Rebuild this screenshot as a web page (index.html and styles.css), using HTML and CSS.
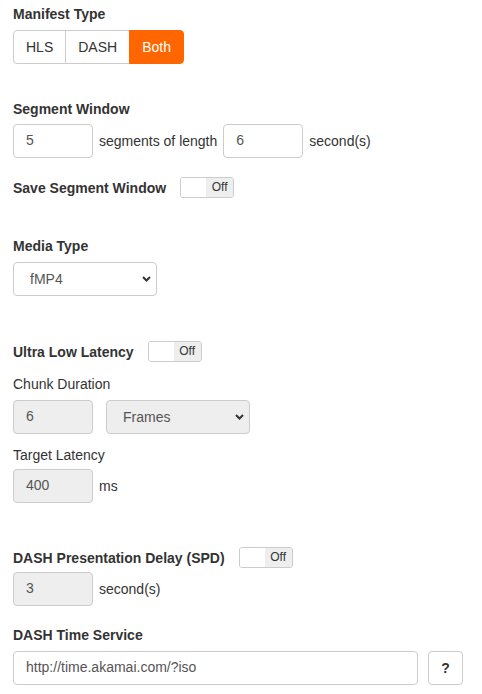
FILE: index.html
```html
<!DOCTYPE html>
<html lang="en">
<head>
  <meta charset="UTF-8" />
  <meta name="viewport" content="width=device-width, initial-scale=1.0"/>
  <title>Stream Settings</title>
  <link rel="stylesheet" href="styles.css">
</head>
<body>
  <div class="settings">
    <label class="title">Manifest Type</label>
    <div class="btn-group">
      <button class="btn">HLS</button>
      <button class="btn">DASH</button>
      <button class="btn active">Both</button>
    </div>

    <label class="title segment-title">Segment Window</label>
    <div class="row">
      <input type="text" class="field" value="5" />
      <span>segments of length</span>
      <input type="text" class="field" value="6" />
      <span>second(s)</span>
    </div>

    <div class="row switch-row save-row">
      <label class="title">Save Segment Window</label>
      <div class="toggle"><span class="on"></span><span class="off">Off</span></div>
    </div>

    <label class="title media-title">Media Type</label>
    <div class="select-wrap media-select">
      <select class="field select">
        <option>fMP4</option>
        <option>TS</option>
      </select>
      <svg class="chevron" width="9" height="6" viewBox="0 0 9 6"><path d="M1 1l3.5 3.5L8 1" fill="none" stroke="#333" stroke-width="2"/></svg>
    </div>

    <div class="row switch-row latency-row">
      <label class="title">Ultra Low Latency</label>
      <div class="toggle"><span class="on"></span><span class="off">Off</span></div>
    </div>

    <label class="sub chunk-title">Chunk Duration</label>
    <div class="row chunk-row">
      <input type="text" class="field" value="6" disabled />
      <div class="select-wrap frames-select">
        <select class="field select" disabled>
          <option>Frames</option>
          <option>Seconds</option>
        </select>
        <svg class="chevron" width="9" height="6" viewBox="0 0 9 6"><path d="M1 1l3.5 3.5L8 1" fill="none" stroke="#333" stroke-width="2"/></svg>
      </div>
    </div>

    <label class="sub target-title">Target Latency</label>
    <div class="row target-row">
      <input type="text" class="field" value="400" disabled />
      <span>ms</span>
    </div>

    <div class="row switch-row spd-row">
      <label class="title">DASH Presentation Delay (SPD)</label>
      <div class="toggle"><span class="on"></span><span class="off">Off</span></div>
    </div>
    <div class="row spd-input">
      <input type="text" class="field" value="3" disabled />
      <span>second(s)</span>
    </div>

    <label class="title time-title">DASH Time Service</label>
    <div class="row time-row">
      <input type="text" class="field wide" value="http://time.akamai.com/?iso" />
      <button class="btn help">?</button>
    </div>
  </div>
</body>
</html>
```

FILE: styles.css
```css
body {
  margin: 0;
  font-family: 'Liberation Sans', Arial, sans-serif;
  font-size: 14px;
  line-height: 20px;
  color: #333;
  background: #fff;
}
.settings {
  padding: 4px 13px 0 13px;
}
.title, .sub {
  display: block;
  font-weight: bold;
}
.sub {
  font-weight: normal;
}
.btn-group {
  display: flex;
  margin-top: 6px;
}
.btn {
  font-family: inherit;
  font-size: 14px;
  line-height: 20px;
  color: #333;
  background: #fff;
  border: 1px solid #ccc;
  padding: 6px 12px;
  height: 34px;
}
.btn-group .btn {
  margin-left: -1px;
  border-radius: 0;
}
.btn-group .btn:first-child {
  margin-left: 0;
  border-radius: 4px 0 0 4px;
}
.btn-group .btn:last-child {
  border-radius: 0 4px 4px 0;
}
.btn-group .btn.active {
  background: #ff6600;
  border-color: #ff6600;
  color: #fff;
}
.row {
  display: flex;
  align-items: center;
  gap: 6px;
}
.field {
  box-sizing: border-box;
  width: 80px;
  height: 34px;
  padding: 5px 12px 7px 12px;
  font-family: inherit;
  font-size: 14px;
  color: #555;
  background: #fff;
  border: 1px solid #ccc;
  border-radius: 4px;
}
.field:disabled {
  background: #eee;
  color: #555;
  opacity: 1;
}
.segment-title {
  margin-top: 35px;
}
.segment-title + .row {
  margin-top: 5px;
}
.switch-row {
  gap: 14px;
}
.save-row {
  margin-top: 19px;
}
.toggle {
  display: flex;
  box-sizing: border-box;
  width: 54px;
  height: 21px;
  border: 1px solid #ccc;
  border-radius: 3px;
  overflow: hidden;
  font-size: 12px;
  line-height: 19px;
}
.toggle .on {
  width: 25px;
  background: #fff;
}
.toggle .off {
  flex: 1;
  background: #eee;
  text-align: center;
}
.media-title {
  margin-top: 38px;
}
.select-wrap {
  position: relative;
  width: 144px;
}
.select {
  -webkit-appearance: none;
  appearance: none;
  width: 144px;
  padding: 6px 12px 6px 16px;
}
.select:disabled {
  color: #555;
}
.chevron {
  position: absolute;
  right: 6px;
  top: 14px;
  pointer-events: none;
}
.media-select {
  margin-top: 6px;
}
.latency-row {
  margin-top: 45px;
}
.chunk-title {
  margin-top: 12px;
}
.chunk-row {
  margin-top: 6px;
  gap: 13px;
}
.target-title {
  margin-top: 11px;
}
.target-row {
  margin-top: 4px;
}
.spd-row {
  margin-top: 44px;
}
.spd-input {
  margin-top: 4px;
}
.time-title {
  margin-top: 19px;
}
.time-row {
  margin-top: 6px;
  gap: 10px;
}
.wide {
  width: 405px;
}
.help {
  width: 35px;
  font-weight: bold;
  border-radius: 4px;
  padding: 6px 0;
}
```
